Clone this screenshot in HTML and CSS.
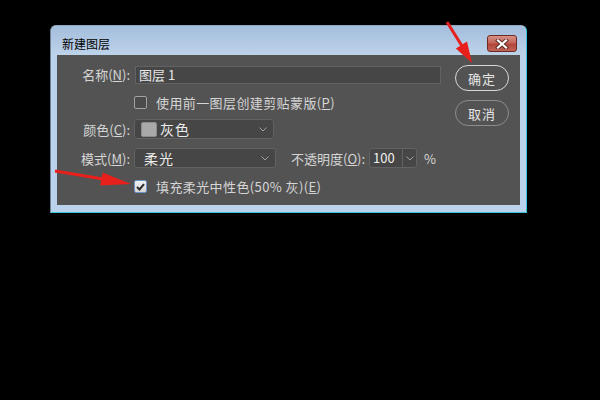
FILE: index.html
```html
<!DOCTYPE html>
<html lang="zh-CN">
	<head>
		<meta charset="UTF-8">
		<title>新建图层</title>
		<link rel="stylesheet" href="styles.css">
	</head>
	<body>
		<div class="dialog">
			<div class="titlebar">
				<span class="title">新建图层</span>
				<span class="close">
					<svg width="14" height="10" viewBox="0 0 14 10">
						<path d="M3 1.5 L11 8.5 M11 1.5 L3 8.5" stroke="#5a2a24" stroke-width="4" stroke-linecap="square"/>
						<path d="M3 1.5 L11 8.5 M11 1.5 L3 8.5" stroke="#ffffff" stroke-width="2.2" stroke-linecap="square"/>
					</svg>
				</span>
			</div>
			<div class="panel">
				<div class="form">
					<div class="row row-name">
						<span class="lbl">名称(<u>N</u>):</span>
						<span class="input">图层 1</span>
					</div>
					<div class="row row-clip">
						<span class="check-line">
							<span class="cb"></span>
							<span class="cb-text">使用前一图层创建剪贴蒙版(<u>P</u>)</span>
						</span>
					</div>
					<div class="row row-color">
						<span class="lbl">颜色(<u>C</u>):</span>
						<span class="select sel-color">
							<span class="swatch"></span><span class="sel-text">灰色</span>
							<svg class="chev" width="8" height="5" viewBox="0 0 8 5"><path d="M0.5 0.5 L4 4 L7.5 0.5" fill="none" stroke="#a0a0a0"/></svg>
						</span>
					</div>
					<div class="row row-mode">
						<span class="lbl">模式(<u>M</u>):</span>
						<span class="mode-line">
							<span class="select sel-mode">
								<span class="sel-text">柔光</span>
								<svg class="chev" width="8" height="5" viewBox="0 0 8 5"><path d="M0.5 0.5 L4 4 L7.5 0.5" fill="none" stroke="#a0a0a0"/></svg>
							</span>
							<span class="opacity-lbl">不透明度(<u>O</u>):</span>
							<span class="num">
								<span class="num-val">100</span>
								<span class="num-drop"><svg width="8" height="5" viewBox="0 0 8 5"><path d="M0.5 0.5 L4 4 L7.5 0.5" fill="none" stroke="#a0a0a0"/></svg></span>
							</span>
							<span class="pct">%</span>
						</span>
					</div>
					<div class="row row-fill">
						<span class="check-line">
							<span class="cb checked">
								<svg width="9" height="8" viewBox="0 0 9 8"><path d="M1 4 L3.5 6.5 L8 1.2" fill="none" stroke="#2b2b2b" stroke-width="2"/></svg>
							</span>
							<span class="cb-text">填充柔光中性色(50% 灰)(<u>E</u>)</span>
						</span>
					</div>
				</div>
				<div class="buttons">
					<span class="btn primary">确定</span>
					<span class="btn">取消</span>
				</div>
			</div>
		</div>

		<svg class="arrows" width="600" height="400" viewBox="0 0 600 400">
			<line x1="447" y1="22" x2="462" y2="46" stroke="#e8201c" stroke-width="3"/>
			<polygon points="472,63 455.8,48.6 467,41.6" fill="#e8201c"/>
			<line x1="55" y1="171" x2="103" y2="179" stroke="#e8201c" stroke-width="3"/>
			<polygon points="131,184 102.6,172.4 100.2,185.4" fill="#e8201c"/>
		</svg>
	</body>
</html>
```

FILE: styles.css
```css
*{
	box-sizing: border-box;
}
body{
	margin: 0;
	width: 600px;
	height: 400px;
	background: #000;
	font-family: "Noto Sans CJK SC", "Noto Sans", sans-serif;
	font-size: 13px;
	position: relative;
	overflow: hidden;
}
u{
	text-decoration: underline;
	text-underline-offset: 1px;
}
.dialog{
	margin: 25px 0 0 50px;
	width: 477px;
	height: 188px;
	background: #bad2eb;
	border-radius: 6px 6px 0 0;
	border-left: 1px solid #6f8296;
	border-right: 1px solid #3cc4dc;
	border-bottom: 1px solid #3cc4dc;
	border-top: 1px solid #8ea6c0;
	display: flex;
	flex-direction: column;
}
.titlebar{
	height: 29px;
	background: linear-gradient(#a3bddb, #bdd3ea);
	border-radius: 6px 6px 0 0;
	display: flex;
	align-items: flex-start;
	justify-content: space-between;
	padding: 0 9px 0 11px;
}
.title{
	color: #000;
	font-size: 12px;
	line-height: 14px;
	margin-top: 11px;
}
.close{
	margin-top: 9px;
	width: 30px;
	height: 17px;
	border: 1px solid #6e2a22;
	border-radius: 3px;
	background: linear-gradient(#d89184 0%, #c4655a 45%, #b4463a 55%, #c06458 100%);
	display: flex;
	align-items: center;
	justify-content: center;
}
.panel{
	margin: 0 6px 7px 6px;
	flex: 1;
	background: #535353;
	display: flex;
	color: #d6d6d6;
}
.form{
	width: 398px;
	padding-top: 10px;
}
.row{
	display: grid;
	grid-template-columns: 73px 1fr;
	column-gap: 4px;
	align-items: center;
}
.lbl{
	grid-column: 1;
	text-align: right;
	white-space: nowrap;
}
.row-name{
	height: 18px;
}
.input{
	height: 18px;
	width: 306px;
	margin-left: 1px;
	background: #464646;
	border: 1px solid #626262;
	color: #e8e8e8;
	padding-left: 3px;
	line-height: 16px;
}
.row-clip{
	height: 18px;
	margin-top: 10px;
}
.check-line{
	grid-column: 2;
	display: flex;
	align-items: center;
}
.cb{
	width: 13px;
	height: 13px;
	border: 1px solid #a2a2a2;
	border-radius: 2px;
	background: #4b4b4b;
	margin-right: 9px;
	display: flex;
	align-items: center;
	justify-content: center;
}
.cb.checked{
	background: linear-gradient(#f0f0f0, #d6d6d6);
	border-color: #6f95c8;
}
.cb-text{
	letter-spacing: 0.4px;
	white-space: nowrap;
}
.row-color{
	height: 20px;
	margin-top: 8px;
}
.select{
	height: 20px;
	background: #464646;
	border: 1px solid #626262;
	border-radius: 3px;
	display: flex;
	align-items: center;
	color: #ececec;
	position: relative;
}
.sel-color{
	width: 140px;
	padding-left: 6px;
}
.swatch{
	width: 16px;
	height: 15px;
	background: #a9a9a9;
	border: 1px solid #8c8c8c;
	border-radius: 2px;
	margin-right: 3px;
}
.sel-text{
	font-size: 14px;
	letter-spacing: 1px;
}
.chev{
	margin-left: auto;
	margin-right: 6px;
}
.row-mode{
	height: 20px;
	margin-top: 9px;
}
.mode-line{
	grid-column: 2;
	display: flex;
	align-items: center;
}
.sel-mode{
	width: 142px;
	padding-left: 9px;
}
.opacity-lbl{
	margin-left: 15px;
	white-space: nowrap;
}
.num{
	margin-left: 4px;
	width: 48px;
	height: 20px;
	border: 1px solid #626262;
	border-radius: 3px;
	background: #464646;
	display: flex;
	color: #f0f0f0;
}
.num-val{
	width: 33px;
	padding-left: 3px;
	line-height: 18px;
	border-right: 1px solid #626262;
}
.num-drop{
	flex: 1;
	display: flex;
	align-items: center;
	justify-content: center;
}
.pct{
	margin-left: 7px;
}
.row-fill{
	height: 18px;
	margin-top: 9px;
}
.buttons{
	display: flex;
	flex-direction: column;
	padding-top: 10px;
	gap: 9px;
}
.btn{
	width: 54px;
	height: 26px;
	border: 1px solid #8c8c8c;
	border-radius: 13px;
	display: flex;
	align-items: center;
	justify-content: center;
	color: #e6e6e6;
	letter-spacing: 1px;
}
.btn.primary{
	border: 1.5px solid #d8d8d8;
}
.arrows{
	position: absolute;
	left: 0;
	top: 0;
}
```
